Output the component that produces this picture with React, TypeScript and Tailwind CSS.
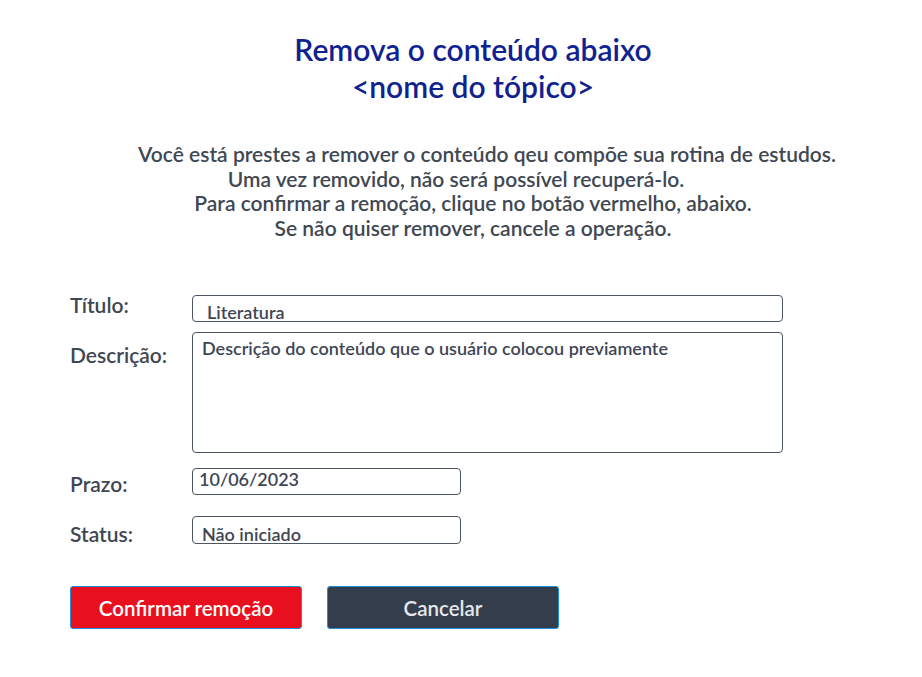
import React from "react";

export default function App() {
  const font = { fontFamily: "Lato, 'Noto Sans', sans-serif" };
  return (
    <div className="w-[922px] h-[677px] bg-white text-[#3f4754]" style={font}>
      <div className="pt-[31px] pl-[24px] flex flex-col items-center text-[#0f2290] text-[30px] leading-[37px] font-semibold">
        <div>Remova o conteúdo abaixo</div>
        <div>&lt;nome do tópico&gt;</div>
      </div>
      <div className="mt-[37px] pl-[24px] flex flex-col items-center text-[21px] leading-[24.6px] font-semibold text-[#404853]">
        <div className="pl-[28px]">Você está prestes a remover o conteúdo qeu compõe sua rotina de estudos.</div>
        <div className="pr-[34px]">Uma vez removido, não será possível recuperá-lo.</div>
        <div>Para confirmar a remoção, clique no botão vermelho, abaixo.</div>
        <div>Se não quiser remover, cancele a operação.</div>
      </div>

      <div className="mt-[55px] pl-[70px] flex flex-col">
        <div className="flex items-start h-[27px]">
          <div className="w-[122px] text-[21px] font-semibold leading-[22px] -mt-[1px]">Título:</div>
          <div className="w-[591px] h-[27px] border border-[#4b5563] rounded-[4px] pl-[14px] text-[18px] font-semibold leading-[20px] pt-[6px] overflow-hidden">
            Literatura
          </div>
        </div>
        <div className="flex items-start mt-[10px]">
          <div className="w-[122px] text-[21px] font-semibold leading-[22px] mt-[12px]">Descrição:</div>
          <div className="w-[591px] h-[121px] border border-[#4b5563] rounded-[4px] pl-[9px] pt-[5px] text-[18px] font-semibold leading-[20px]">
            Descrição do conteúdo que o usuário colocou previamente
          </div>
        </div>
        <div className="flex items-start mt-[15px]">
          <div className="w-[122px] text-[21px] font-semibold leading-[22px] mt-[5px]">Prazo:</div>
          <div className="w-[269px] h-[27px] border border-[#4b5563] rounded-[4px] pl-[6px] text-[18px] font-semibold leading-[20px] pt-0">
            10/06/2023
          </div>
        </div>
        <div className="flex items-start mt-[21px]">
          <div className="w-[122px] text-[21px] font-semibold leading-[22px] mt-[7px]">Status:</div>
          <div className="w-[269px] h-[28px] border border-[#4b5563] rounded-[4px] pl-[9px] text-[18px] font-semibold leading-[20px] pt-[7px] overflow-hidden">
            Não iniciado
          </div>
        </div>

        <div className="flex mt-[41px] gap-[25px]">
          <button className="w-[232px] h-[43px] bg-[#e8101f] border border-[#1e8fe0] rounded-[3px] text-white text-[20.5px] font-semibold">
            Confirmar remoção
          </button>
          <button className="w-[232px] h-[43px] bg-[#343d4b] border border-[#1e8fe0] rounded-[3px] text-[#e5e7eb] text-[20.5px] font-semibold">
            Cancelar
          </button>
        </div>
      </div>
    </div>
  );
}
